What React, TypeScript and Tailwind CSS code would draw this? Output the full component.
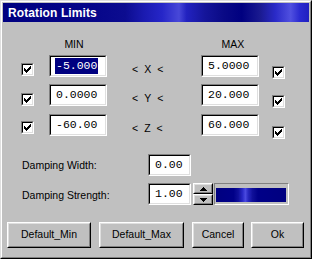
import React from "react";

const CHECK = [
  [6, 0], [5, 1], [6, 1], [0, 2], [4, 2], [5, 2], [6, 2],
  [0, 3], [1, 3], [3, 3], [4, 3], [5, 3],
  [0, 4], [1, 4], [2, 4], [3, 4], [4, 4],
  [1, 5], [2, 5], [3, 5], [2, 6],
];

function CheckBox({ className = "" }: { className?: string }) {
  return (
    <div className={"w-[13px] h-[13px] border border-t-[#808080] border-l-[#808080] border-b-white border-r-white " + className}>
      <div className="w-full h-full bg-white border border-t-black border-l-black border-b-[#dfdfdf] border-r-[#dfdfdf] flex items-center justify-center">
        <svg width="7" height="7" viewBox="0 0 7 7" shapeRendering="crispEdges">
          {CHECK.map(([x, y]) => (
            <rect key={x + "-" + y} x={x} y={y} width="1" height="1" fill="#000" />
          ))}
        </svg>
      </div>
    </div>
  );
}

function Field({ value, w, selected = false }: { value: string; w: string; selected?: boolean }) {
  return (
    <div className={"h-[22px] border border-t-[#808080] border-l-[#808080] border-b-white border-r-white " + w}>
      <div className="w-full h-full bg-white border border-t-black border-l-black border-b-[#dfdfdf] border-r-[#dfdfdf] flex items-center pl-[4px] font-['Liberation_Mono',monospace] text-[11.5px] leading-[16px] text-black">
        {selected ? <span className="bg-[#000080] text-white px-[1px]">{value}</span> : <span className="px-[1px]">{value}</span>}
      </div>
    </div>
  );
}

function Btn({ label, w }: { label: string; w: string }) {
  return (
    <div className={"h-[26px] border border-t-white border-l-white border-b-black border-r-black " + w}>
      <div className="w-full h-full border border-t-[#dfdfdf] border-l-[#dfdfdf] border-b-[#808080] border-r-[#808080] flex items-center justify-center text-black">
        {label}
      </div>
    </div>
  );
}

function SpinHalf({ up }: { up: boolean }) {
  return (
    <div className="h-[11px] w-[20px] border border-t-white border-l-white border-b-black border-r-black">
      <div className="w-full h-full border border-t-[#dfdfdf] border-l-[#dfdfdf] border-b-[#808080] border-r-[#808080] flex items-center justify-center">
        <svg width="7" height="4" viewBox="0 0 7 4" shapeRendering="crispEdges">
          {up ? (
            <>
              <rect x="3" y="0" width="1" height="1" fill="#000" />
              <rect x="2" y="1" width="3" height="1" fill="#000" />
              <rect x="1" y="2" width="5" height="1" fill="#000" />
              <rect x="0" y="3" width="7" height="1" fill="#000" />
            </>
          ) : (
            <>
              <rect x="0" y="0" width="7" height="1" fill="#000" />
              <rect x="1" y="1" width="5" height="1" fill="#000" />
              <rect x="2" y="2" width="3" height="1" fill="#000" />
              <rect x="3" y="3" width="1" height="1" fill="#000" />
            </>
          )}
        </svg>
      </div>
    </div>
  );
}

function AxisLabel({ axis }: { axis: string }) {
  return (
    <div className="w-[94px] pl-[25px] flex gap-[6px] leading-[12px] text-black">
      <span>&lt;</span>
      <span>{axis}</span>
      <span>&lt;</span>
    </div>
  );
}

function AxisRow({ axis, min, max, selected, lOff, rOff, mt }: { axis: string; min: string; max: string; selected?: boolean; lOff: string; rOff: string; mt: string }) {
  return (
    <div className={"flex items-start pl-[18px] " + mt}>
      <CheckBox className={lOff} />
      <div className="ml-[15px]">
        <Field value={min} w="w-[58px]" selected={selected} />
      </div>
      <div className="mt-[8px]">
        <AxisLabel axis={axis} />
      </div>
      <Field value={max} w="w-[58px]" />
      <CheckBox className={"ml-[13px] " + rOff} />
    </div>
  );
}

export default function App() {
  return (
    <div className="w-[312px] h-[259px] bg-[#c0c0c0] border border-t-[#dfdfdf] border-l-[#dfdfdf] border-r-black border-b-black font-['Liberation_Sans',Arial,sans-serif] text-[10.5px] select-none">
      <div className="w-full h-full border border-t-white border-l-white border-r-[#808080] border-b-[#808080] p-px flex flex-col">
        <div className="h-[19px] flex items-center pl-[5px] pt-[1px] bg-[linear-gradient(90deg,#000080_0%,#06068a_30%,#0c0c90_40%,#1a1ab0_46%,#2626c8_52%,#4848d8_57.5%,#2222c0_60%,#15159a_66%,#0a0a86_72%,#000080_78%,#1a1a90_84%,#2a2ac8_89%,#5050e0_94%,#2a2ad0_97%,#2020c0_100%)]">
          <span className="text-white font-bold text-[12px] leading-[14px] tracking-[0.1px]">Rotation Limits</span>
        </div>

        <div className="flex mt-[16px] pl-[46px] leading-[12px] text-black">
          <div className="w-[50px] text-center">MIN</div>
          <div className="w-[102px]" />
          <div className="w-[64px] text-center">MAX</div>
        </div>

        <AxisRow axis="X" min="-5.000" max="5.0000" selected lOff="mt-[8px]" rOff="mt-[11px]" mt="mt-[5px]" />
        <AxisRow axis="Y" min="0.0000" max="20.000" lOff="mt-[9px]" rOff="mt-[11px]" mt="mt-[5px]" />
        <AxisRow axis="Z" min="-60.00" max="60.000" lOff="mt-[7px]" rOff="mt-[12px]" mt="mt-[6px]" />

        <div className="flex items-center pl-[19px] mt-[15px]">
          <div className="w-[126px] text-black leading-[12px]">Damping Width:</div>
          <Field value="0.00" w="w-[43px]" />
        </div>

        <div className="flex items-center pl-[19px] mt-[7px]">
          <div className="w-[126px] text-black leading-[12px] pt-[2px]">Damping Strength:</div>
          <Field value="1.00" w="w-[43px]" />
          <div className="ml-[2px] flex flex-col">
            <SpinHalf up />
            <SpinHalf up={false} />
          </div>
          <div className="ml-[1px] w-[75px] h-[22px] border border-t-[#808080] border-l-[#808080] border-b-white border-r-white pt-[4px] pb-[2px] pl-[1px] pr-[2px]">
            <div className="w-full h-full bg-[linear-gradient(90deg,#000080_0%,#000088_25%,#10109a_32%,#2a2ac8_38%,#4a4ae0_42%,#2828c0_46%,#10109a_52%,#000088_60%,#000080_100%)]" />
          </div>
        </div>

        <div className="flex pl-[4px] mt-[17px]">
          <Btn label="Default_Min" w="w-[84px]" />
          <div className="ml-[8px]"><Btn label="Default_Max" w="w-[85px]" /></div>
          <div className="ml-[8px]"><Btn label="Cancel" w="w-[52px]" /></div>
          <div className="ml-[7px]"><Btn label="Ok" w="w-[53px]" /></div>
        </div>
      </div>
    </div>
  );
}
